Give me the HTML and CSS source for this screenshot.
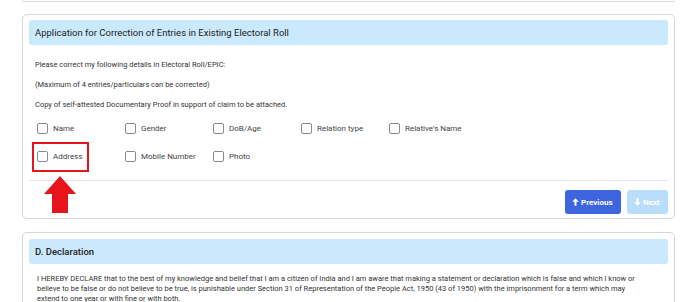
FILE: index.html
```html
<!DOCTYPE html>
<html lang="en">
<head>
  <meta charset="UTF-8">
  <meta name="viewport" content="width=device-width, initial-scale=1.0">
  <title>Correction of Entries</title>
  <link rel="stylesheet" href="styles.css">
</head>
<body>
  <div class="page">
    <div class="card card-prev"></div>

    <div class="card">
      <div class="card-header">Application for Correction of Entries in Existing Electoral Roll</div>
      <div class="card-body">
        <p>Please correct my following details in Electoral Roll/EPIC:</p>
        <p>(Maximum of 4 entries/particulars can be corrected)</p>
        <p>Copy of self-attested Documentary Proof in support of claim to be attached.</p>

        <div class="options">
          <label class="option"><span class="check"></span>Name</label>
          <label class="option"><span class="check"></span>Gender</label>
          <label class="option"><span class="check"></span>DoB/Age</label>
          <label class="option"><span class="check"></span>Relation type</label>
          <label class="option"><span class="check"></span>Relative's Name</label>
          <label class="option highlighted">
            <span class="check"></span>Address
            <span class="mark-box"></span>
            <svg class="mark-arrow" width="32" height="37" viewBox="0 0 32 37">
              <polygon points="16,0 32,18 24,18 24,37 8,37 8,18 0,18" fill="#e8141c"/>
            </svg>
          </label>
          <label class="option"><span class="check"></span>Mobile Number</label>
          <label class="option"><span class="check"></span>Photo</label>
        </div>
      </div>
      <div class="card-footer">
        <button class="btn btn-primary">
          <svg width="7" height="8" viewBox="0 0 7 8"><path d="M3.5 0.3 L6.8 3.8 H4.5 V7.7 H2.5 V3.8 H0.2 Z" fill="#fff"/></svg>
          Previous
        </button>
        <button class="btn btn-disabled">
          <svg width="7" height="8" viewBox="0 0 7 8"><path d="M3.5 7.7 L6.8 4.2 H4.5 V0.3 H2.5 V4.2 H0.2 Z" fill="#fff"/></svg>
          Next
        </button>
      </div>
    </div>

    <div class="card card-next">
      <div class="card-header header-strong">D. Declaration</div>
      <div class="card-body declaration">
        <p>I HEREBY DECLARE that to the best of my knowledge and belief that I am a citizen of India and I am aware that making a statement or declaration which is false and which I know or believe to be false or do not believe to be true, is punishable under Section 31 of Representation of the People Act, 1950 (43 of 1950) with the imprisonment for a term which may extend to one year or with fine or with both.</p>
      </div>
    </div>
  </div>
</body>
</html>
```

FILE: styles.css
```css
* {
  box-sizing: border-box;
  margin: 0;
  padding: 0;
}

body {
  font-family: Roboto, "Liberation Sans", sans-serif;
  background-color: #fff;
  color: #333;
}

.page {
  width: 653px;
  margin-left: 22px;
}

.card {
  border: 1px solid #d6d6d6;
  border-radius: 5px;
  padding: 5px 6px 4px;
  margin-top: 12px;
}

.card-prev {
  height: 2px;
  margin-top: 0;
  padding: 0;
  border-top: none;
  border-radius: 0 0 5px 5px;
}

.card-next {
  margin-top: 13px;
  padding-top: 6px;
}

.card-header {
  height: 25px;
  line-height: 25px;
  padding-left: 6px;
  background-color: #cbe9fc;
  border-radius: 3px;
  font-size: 9.5px;
  color: #222;
}

.header-strong {
  font-weight: 500;
}

.card-body {
  padding: 10px 0 0 6px;
}

.card-body p {
  font-size: 7.5px;
  line-height: 20px;
  color: #333;
}

.options {
  display: grid;
  grid-template-columns: repeat(5, 88px);
  row-gap: 10px;
  padding: 4px 0 15px 2px;
}

.option {
  display: flex;
  align-items: center;
  height: 18px;
  font-size: 8px;
  color: #444;
}

.check {
  width: 11px;
  height: 11px;
  border: 1px solid #8a8a8a;
  border-radius: 2px;
  margin-right: 5px;
  background: #fff;
}

.highlighted {
  position: relative;
}

.mark-box {
  position: absolute;
  left: -5px;
  top: -5px;
  width: 57px;
  height: 30px;
  border: 2px solid #e8141c;
}

.mark-arrow {
  position: absolute;
  left: 7px;
  top: 29px;
}

.card-footer {
  display: flex;
  justify-content: flex-end;
  gap: 6px;
  border-top: 1px solid #e6e6e6;
  padding-top: 9px;
}

.btn {
  height: 24px;
  border: none;
  border-radius: 3px;
  padding: 0 7px;
  font-family: Roboto, "Liberation Sans", sans-serif;
  font-size: 8px;
  font-weight: bold;
  color: #fff;
  display: flex;
  align-items: center;
  gap: 2px;
}

.btn-primary {
  width: 56px;
  background-color: #3d65df;
}

.btn-disabled {
  width: 41px;
  background-color: #b8defb;
}

.declaration {
  padding: 10px 19px 0 8px;
}

.declaration p {
  line-height: 10px;
}
```
